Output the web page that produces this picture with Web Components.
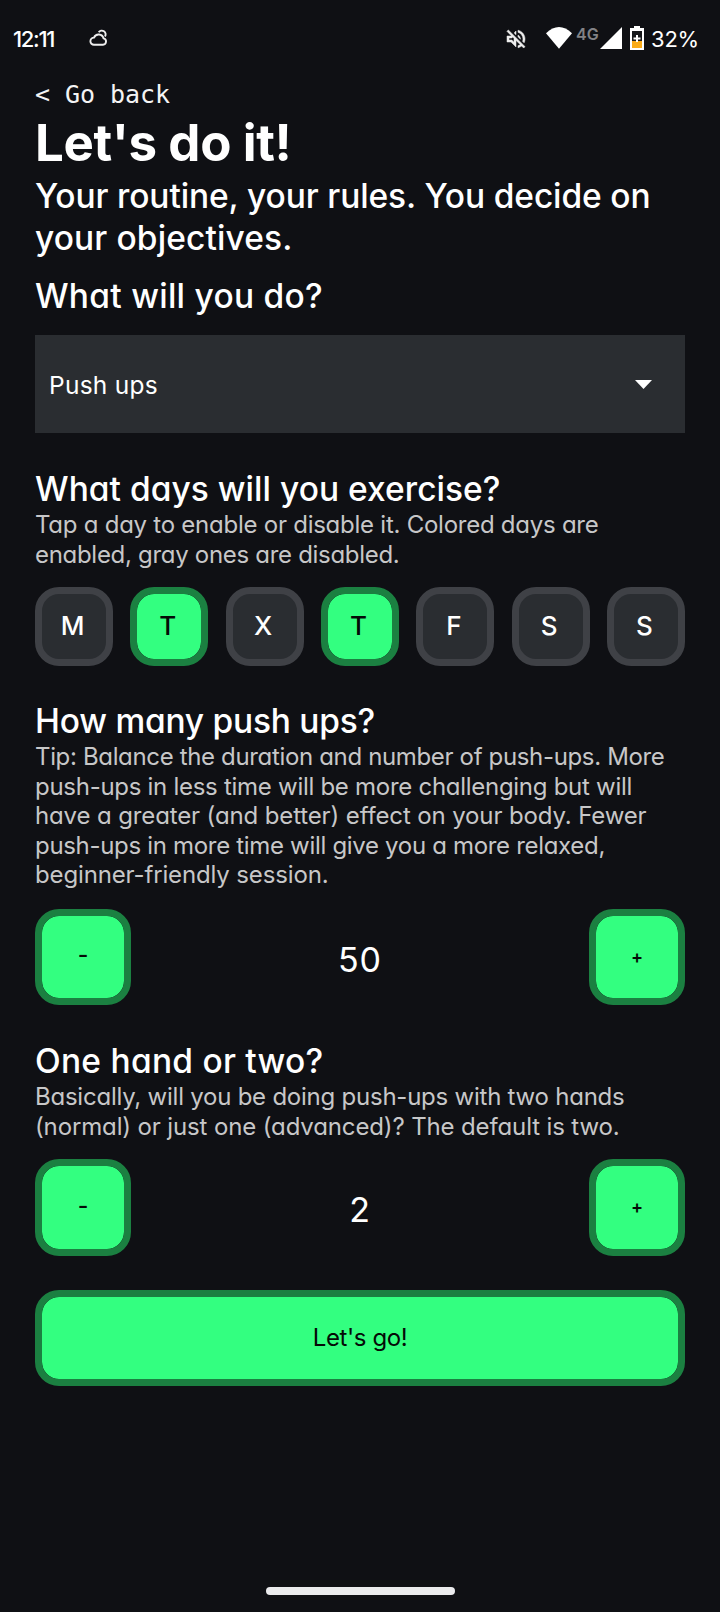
<!DOCTYPE html>
<html lang="en">
<head>
<meta charset="utf-8">
<title>Let's do it!</title>
<style>
html,body{margin:0;background:#0f1014}
body{width:720px;height:1612px;overflow:hidden;color:#fff;font-family:Inter,"Noto Sans",sans-serif;font-feature-settings:"cv11" 1}
</style>
</head>
<body>
<routine-screen></routine-screen>
<script>
const define=(name,html,ready)=>customElements.define(name,class extends HTMLElement{
  connectedCallback(){
    if(this.shadowRoot)return;
    const t=document.createElement('template');
    t.innerHTML=html;
    this.attachShadow({mode:'open'}).append(t.content.cloneNode(true));
    if(ready)ready.call(this);
  }
});

/* One line of text whose tracking is set so that it spans the given width. */
define('text-line',`<style>:host{display:block;white-space:nowrap}span{display:inline-block}</style><span><slot></slot></span>`,function(){
  const s=this.shadowRoot.querySelector('span'),w=parseFloat(this.getAttribute('w'));
  if(!w)return;
  const n=this.textContent.length,nat=s.getBoundingClientRect().width;
  const k=(w-nat)/n;
  s.style.letterSpacing=k.toFixed(3)+'px';
});
define('page-title',`<style>:host{display:block;font-size:51px;font-weight:700;line-height:60px}</style><slot></slot>`);
define('section-title',`<style>:host{display:block;font-size:33.5px;font-weight:500;line-height:42px}</style><slot></slot>`);
define('help-text',`<style>:host{display:block;font-size:24px;line-height:29.5px;color:#c7c7c8}</style><slot></slot>`);
define('back-link',`<style>:host{display:block;font:25px/30px "DejaVu Sans Mono",monospace;color:#f4f4f4}</style><slot></slot>`);
define('select-box',`<style>:host{display:flex;box-sizing:border-box;height:98px;background:#2a2d31;align-items:center;justify-content:space-between;padding:0 33px 0 14px;font-size:24.5px}svg{display:block}::slotted(*){padding-top:2px}</style><slot></slot><svg width="17" height="9"><path d="M0 0h17L8.5 9z" fill="#fff"/></svg>`);
define('push-button',`<style>:host{display:flex;box-sizing:border-box;height:var(--h,96px);width:var(--w,96px);border:7px solid #1b8041;border-radius:24px;background:#33ff80;background-clip:padding-box;color:#050b07;align-items:center;justify-content:center;font-size:24px;font-weight:400;padding-bottom:2px}
:host([sign]){font-size:18px;font-weight:600;padding-bottom:2px}
:host([sign=minus]){font-size:23px;font-weight:500;padding-bottom:4px}
:host([day]){--w:78px;--h:79px;font-size:26px;font-weight:500;padding:0 3px 3px 0}
:host([off]){background:#2a2d31;border-color:#3f4146;color:#fff;font-weight:550}</style><slot></slot>`);
define('day-row',`<style>:host{display:flex;justify-content:space-between}</style><slot></slot>`);
define('number-stepper',`<style>:host{display:flex;justify-content:space-between;align-items:center}output{font-size:34px;padding-top:4px;letter-spacing:1px}</style><push-button sign="minus">-</push-button><output><slot></slot></output><push-button sign="plus">+</push-button>`);
define('status-bar',`<style>
:host{display:flex;height:79px;box-sizing:border-box;padding:27px 22px 0 13px;align-items:flex-start;font-size:22px}
svg{display:block;flex:none}
.time{line-height:25px;width:76px;font-weight:500}.grow{flex:1}.net{font-size:16px;font-weight:600;color:#828285;line-height:14px;width:24px;margin-left:4px}.pct{line-height:25px;margin-left:7px;width:47px}
</style>
<text-line class="time" w="41">12:11</text-line>
<svg width="19" height="18" viewBox="0 0 19 18" style="margin-top:2px" fill="none" stroke="#eee" stroke-width="1.9"><path d="M5 15.8h9a3.3 3.3 0 0 0 .5-6.5A5 5 0 0 0 5 8.6a3.6 3.6 0 0 0 0 7.2z"/><path d="M9.7 3.3A3.7 3.7 0 1 1 16 7.5"/></svg>
<div class="grow"></div>
<svg width="24" height="24" viewBox="0 0 24 24" fill="#eee" stroke="#eee" stroke-width=".5"><path d="M4.34 2.93 2.93 4.34 7.29 8.7 7 9H3v6h4l5 5v-6.59l4.18 4.18c-.65.49-1.38.88-2.18 1.11v2.06a8.9 8.9 0 0 0 3.61-1.75l2.05 2.05 1.41-1.41zM10 15.17 7.83 13H5v-2h2.83l.88-.88L10 11.41zM19 12c0 .82-.15 1.61-.41 2.34l1.53 1.53c.56-1.17.88-2.48.88-3.87 0-4.28-2.99-7.86-7-8.77v2.06c2.89.86 5 3.54 5 6.71zm-7-8-1.88 1.88L12 7.76zm4.5 8A4.5 4.5 0 0 0 14 7.97v1.79l2.48 2.48c.01-.08.02-.16.02-.24z"/></svg>
<svg width="26" height="22" viewBox="0 0 26 22" style="margin-left:18px" fill="#fff"><path d="M13 21.8 0 6.2Q13-6.2 26 6.2z"/></svg>
<span class="net">4G</span>
<svg width="22" height="22" style="margin-left:0"><path d="M0 22 22 0V22z" fill="#fff"/></svg>
<svg width="14" height="24" viewBox="0 0 14 24" style="margin:-1px 0 0 8px"><path d="M4 0h6v2h4v22H0V2h4z" fill="#fff"/><path d="M2 5h10v10H2z" fill="#17181b"/><path d="M2 15h10v7H2z" fill="#fbac18"/><path d="M7 9v7M3.5 12.5h7" stroke="#fff" stroke-width="2"/></svg>
<text-line class="pct" w="48">32%</text-line>`);
define('home-handle',`<style>:host{display:block;width:189px;height:8px;border-radius:4px;background:#ebebed;margin:auto auto 17px}</style>`);
define('routine-screen',`<style>
:host{display:flex;flex-direction:column;height:1612px}
main{padding:0 35px;display:flex;flex-direction:column}
</style>
<status-bar></status-bar>
<main>
<back-link style="margin-top:1px"><text-line w="135">&lt; Go back</text-line></back-link>
<page-title style="margin-top:3px"><text-line w="256.5">Let's do it!</text-line></page-title>
<section-title style="margin-top:2px"><text-line w="615.5">Your routine, your rules. You decide on</text-line><text-line w="257.5">your objectives.</text-line></section-title>
<section-title style="margin-top:16px"><text-line w="288">What will you do?</text-line></section-title>
<select-box style="margin-top:18px"><text-line w="109">Push ups</text-line></select-box>
<section-title style="margin-top:35px"><text-line w="465.5">What days will you exercise?</text-line></section-title>
<help-text><text-line w="563.5">Tap a day to enable or disable it. Colored days are</text-line><text-line w="364.5">enabled, gray ones are disabled.</text-line></help-text>
<day-row style="margin-top:18px"><push-button day off>M</push-button><push-button day>T</push-button><push-button day off>X</push-button><push-button day>T</push-button><push-button day off>F</push-button><push-button day off>S</push-button><push-button day off>S</push-button></day-row>
<section-title style="margin-top:34px"><text-line w="340">How many push ups?</text-line></section-title>
<help-text><text-line w="629.5">Tip: Balance the duration and number of push-ups. More</text-line><text-line w="597">push-ups in less time will be more challenging but will</text-line><text-line w="611.5">have a greater (and better) effect on your body. Fewer</text-line><text-line w="570">push-ups in more time will give you a more relaxed,</text-line><text-line w="293.5">beginner-friendly session.</text-line></help-text>
<number-stepper style="margin-top:19.5px">50</number-stepper>
<section-title style="margin-top:35px"><text-line w="288.5">One hand or two?</text-line></section-title>
<help-text><text-line w="589.5">Basically, will you be doing push-ups with two hands</text-line><text-line w="584.5">(normal) or just one (advanced)? The default is two.</text-line></help-text>
<number-stepper style="margin-top:18px;--h:97px">2</number-stepper>
<push-button style="margin-top:34px;--w:650px"><text-line w="94.5">Let's go!</text-line></push-button>
</main>
<home-handle></home-handle>`);
</script>
</body>
</html>
